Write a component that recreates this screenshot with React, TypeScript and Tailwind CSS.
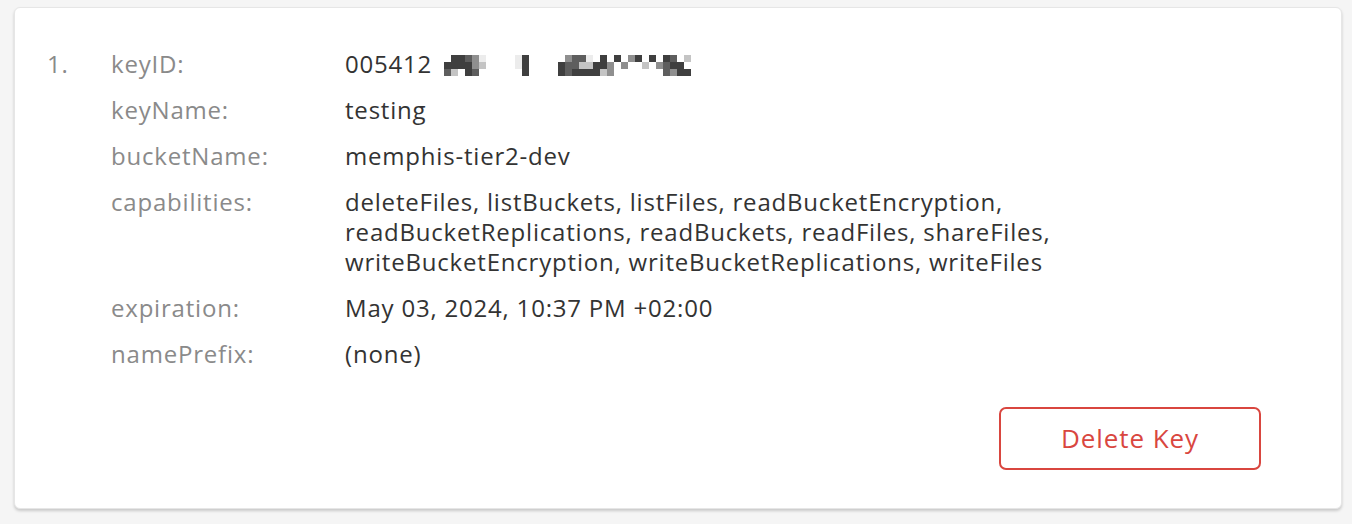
const shades: Record<string, string> = {
  '.': '#ffffff',
  a: '#3f3f3f',
  b: '#5e5e5e',
  c: '#8f8f8f',
  d: '#c4c4c4',
  e: '#ececec',
};

// pixelated blur over the rest of the key id
const blurGroups: { gap: number; rows: string[] }[] = [
  { gap: 12, rows: ['.aabce.', 'aaaacd.', 'bd.ab..'] },
  { gap: 22, rows: ['ea', 'ea', '.a'] },
  { gap: 29, rows: ['.cbbe.a.a.ca.a.ab.d', 'abbddaac.c..d.cbaa.', 'abaaaadc.......bcaa'] },
];

function Redaction() {
  return (
    <span className="inline-flex items-center translate-y-[1px]">
      {blurGroups.map((g, gi) => (
        <span key={gi} className="inline-flex flex-col" style={{ marginLeft: g.gap }}>
          {g.rows.map((row, ri) => (
            <span key={ri} className="flex">
              {row.split('').map((ch, ci) => (
                <span key={ci} className="w-[7px] h-[7px]" style={{ background: shades[ch] }} />
              ))}
            </span>
          ))}
        </span>
      ))}
    </span>
  );
}

const rows: { label: string; value: string[] }[] = [
  { label: 'keyName:', value: ['testing'] },
  { label: 'bucketName:', value: ['memphis-tier2-dev'] },
  {
    label: 'capabilities:',
    value: [
      'deleteFiles, listBuckets, listFiles, readBucketEncryption,',
      'readBucketReplications, readBuckets, readFiles, shareFiles,',
      'writeBucketEncryption, writeBucketReplications, writeFiles',
    ],
  },
  { label: 'expiration:', value: ['May 03, 2024, 10:37 PM +02:00'] },
  { label: 'namePrefix:', value: ['(none)'] },
];

export default function App() {
  return (
    <div
      className="min-h-screen bg-[#f5f5f5] pt-[7px] px-[10px]"
      style={{ fontFamily: '"Open Sans", "Liberation Sans", sans-serif' }}
    >
      <div className="ml-[4px] bg-white rounded-[6px] border border-[#e6e6e6] shadow-[0_2px_3px_rgba(0,0,0,0.18)] pl-[32px] pr-[80px] pt-[41px] pb-[38px]">
        <div className="grid grid-cols-[64px_234px_1fr] gap-y-[16px] text-[24px] leading-[30px] tracking-[0.8px]">
          <div className="text-[#8a8a8a]">1.</div>
          <div className="text-[#8a8a8a]">keyID:</div>
          <div className="text-[#333333] flex items-center">
            <span className="whitespace-nowrap">005412</span>
            <Redaction />
          </div>
          {rows.map((r) => (
            <div key={r.label} className="contents">
              <div />
              <div className="text-[#8a8a8a]">{r.label}</div>
              <div className="text-[#333333]">
                {r.value.map((v) => (
                  <div key={v}>{v}</div>
                ))}
              </div>
            </div>
          ))}
        </div>
        <div className="flex justify-end mt-[38px]">
          <button className="w-[262px] h-[63px] rounded-[7px] border-2 border-[#d9463f] text-[#d9463f] text-[26px] tracking-[0.9px] bg-white">
            Delete Key
          </button>
        </div>
      </div>
    </div>
  );
}
